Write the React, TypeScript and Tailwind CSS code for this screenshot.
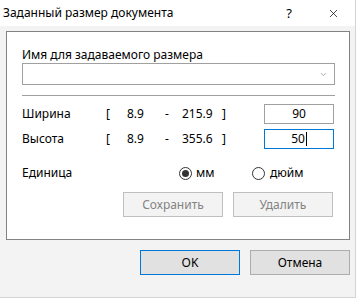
import { X, ChevronDown } from "lucide-react";

const font = { fontFamily: '"Segoe UI", "Noto Sans", "Open Sans", sans-serif' };

function Range({ min, max }: { min: string; max: string }) {
  return (
    <div className="flex items-center">
      <span className="w-[22px] pl-[1px]">[</span>
      <span className="w-[38px] pl-[0px]">{min}</span>
      <span className="w-[17px]">-</span>
      <span className="w-[40px]">{max}</span>
      <span className="w-[42px]">]</span>
    </div>
  );
}

export default function App() {
  return (
    <div
      className="relative flex h-[298px] w-[356px] flex-col overflow-hidden border-b border-r border-[#d4d4d4] bg-[#f3f3f3] text-[12px] text-black"
      style={font}
    >
      {/* titre */}
      <div className="flex h-[26px] shrink-0 items-center bg-white">
        <span className="pl-[3px] leading-none">Заданный размер документа</span>
        <span className="ml-auto mr-[35px] text-[13px] leading-none">?</span>
        <X className="mr-[15px] h-[13px] w-[13px]" strokeWidth={1.3} />
      </div>

      {/* panneau */}
      <div className="ml-[6px] mt-[5px] h-[209px] w-[344px] border border-[#828282] bg-white pl-[15px] pr-[15px]">
        <div className="mt-[15px] leading-[16px]">Имя для задаваемого размера</div>
        <div className="mt-[0px] flex h-[22px] w-[313px] items-center justify-end border border-[#a0a0a0] pr-[6px]">
          <ChevronDown className="h-[9px] w-[9px] text-[#707070]" strokeWidth={1.5} />
        </div>
        <div className="mt-[10px] h-px w-[313px] bg-[#a0a0a0]" />

        <div className="mt-[8px] flex h-[20px] items-center">
          <span className="w-[83px]">Ширина</span>
          <Range min="8.9" max="215.9" />
          <div className="flex h-[20px] w-[70px] items-center justify-center border border-[#a0a0a0]">90</div>
        </div>
        <div className="mt-[5px] flex h-[20px] items-center">
          <span className="w-[83px]">Высота</span>
          <Range min="8.9" max="355.6" />
          <div className="flex h-[20px] w-[70px] items-center justify-center border border-[#0078d7]">
            50<span className="ml-px h-[14px] w-px bg-black" />
          </div>
        </div>

        <div className="mt-[16px] flex h-[16px] items-center">
          <span className="w-[157px]">Единица</span>
          <div className="flex items-center">
            <span className="flex h-[13px] w-[13px] items-center justify-center rounded-full border border-[#333]">
              <span className="h-[7px] w-[7px] rounded-full bg-[#333]" />
            </span>
            <span className="ml-[4px] w-[56px]">мм</span>
          </div>
          <div className="flex items-center">
            <span className="h-[13px] w-[13px] rounded-full border border-[#333]" />
            <span className="ml-[5px]">дюйм</span>
          </div>
        </div>

        <div className="mt-[11px] flex gap-[10px] pl-[101px]">
          <div className="flex h-[25px] w-[100px] items-center justify-center border border-[#bfbfbf] bg-[#f3f3f3] text-[#838383]">
            Сохранить
          </div>
          <div className="flex h-[25px] w-[100px] items-center justify-center border border-[#bfbfbf] bg-[#f3f3f3] text-[#838383]">
            Удалить
          </div>
        </div>
      </div>

      {/* boutons */}
      <div className="mt-[10px] flex gap-[10px] pl-[140px]">
        <div className="flex h-[25px] w-[100px] items-center justify-center border border-[#0078d7] bg-[#e1e1e1]">
          OK
        </div>
        <div className="flex h-[25px] w-[100px] items-center justify-center border border-[#adadad] bg-[#e1e1e1]">
          Отмена
        </div>
      </div>
    </div>
  );
}
